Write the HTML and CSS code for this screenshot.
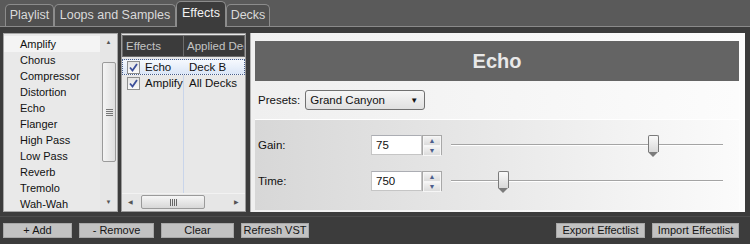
FILE: index.html
```
<!DOCTYPE html>
<html>
  <head>
    <meta charset="utf-8" />
    <title>Effects</title>
    <link rel="stylesheet" href="styles.css">
  </head>
  <body>
    <div id="tabbar">
      <div class="tab" style="width:49px">Playlist</div>
      <div class="tab" style="width:122px">Loops and Samples</div>
      <div class="tab active" style="width:50px">Effects</div>
      <div class="tab" style="width:44px">Decks</div>
    </div>

    <div id="workspace">
      <div id="effectlist">
        <div class="items">
          <div class="item current">Amplify</div>
          <div class="item">Chorus</div>
          <div class="item">Compressor</div>
          <div class="item">Distortion</div>
          <div class="item">Echo</div>
          <div class="item">Flanger</div>
          <div class="item">High Pass</div>
          <div class="item">Low Pass</div>
          <div class="item">Reverb</div>
          <div class="item">Tremolo</div>
          <div class="item">Wah-Wah</div>
        </div>
        <div class="vscroll">
          <div class="arrow">&#9650;</div>
          <div class="track">
            <div class="vthumb"><span class="grip-h"></span></div>
          </div>
          <div class="arrow">&#9660;</div>
        </div>
      </div>

      <div id="applied">
        <div class="header">
          <div class="col first">Effects</div>
          <div class="col">Applied Decks</div>
        </div>
        <div class="rows">
          <div class="row selected">
            <div class="col first"><span class="check"><svg width="11" height="11" viewBox="0 0 11 11"><path d="M2 5.5 L4.5 8.5 L9 2" fill="none" stroke="#3c4f9a" stroke-width="1.8"/></svg></span>Echo</div>
            <div class="col">Deck B</div>
          </div>
          <div class="row">
            <div class="col first"><span class="check"><svg width="11" height="11" viewBox="0 0 11 11"><path d="M2 5.5 L4.5 8.5 L9 2" fill="none" stroke="#3c4f9a" stroke-width="1.8"/></svg></span>Amplify</div>
            <div class="col">All Decks</div>
          </div>
        </div>
        <div class="hscroll">
          <div class="arrow">&#9664;</div>
          <div class="htrack">
            <div class="hthumb"><span class="grip-v"></span></div>
          </div>
          <div class="arrow">&#9654;</div>
        </div>
      </div>

      <div id="editor">
        <div class="title">Echo</div>
        <div class="presets">
          <span>Presets:</span>
          <div class="select">
            <span>Grand Canyon</span>
            <span class="caret">&#9660;</span>
          </div>
        </div>
        <div class="params">
          <div class="param">
            <span class="label">Gain:</span>
            <div class="number">75</div>
            <div class="spin">
              <div class="spinbtn">&#9650;</div>
              <div class="spinbtn">&#9660;</div>
            </div>
            <div class="slider">
              <div class="line"></div>
              <div class="knob" style="left:72.4%"></div>
            </div>
          </div>
          <div class="param">
            <span class="label">Time:</span>
            <div class="number">750</div>
            <div class="spin">
              <div class="spinbtn">&#9650;</div>
              <div class="spinbtn">&#9660;</div>
            </div>
            <div class="slider">
              <div class="line"></div>
              <div class="knob" style="left:17.3%"></div>
            </div>
          </div>
        </div>
      </div>
    </div>

    <div id="toolbar">
      <button style="width:69px">+ Add</button>
      <button style="width:75px">- Remove</button>
      <button style="width:73px">Clear</button>
      <button style="width:68px">Refresh VST</button>
      <div class="spacer"></div>
      <button style="width:89px">Export Effectlist</button>
      <button style="width:87px">Import Effectlist</button>
    </div>
  </body>
</html>
```

FILE: styles.css
```
* {
  box-sizing: border-box;
  font-family: "Liberation Sans", Arial, sans-serif;
}
body {
  margin: 0;
  width: 750px;
  height: 244px;
  overflow: hidden;
  background-color: #3c3c3c;
  font-size: 11px;
  color: #111;
}

/* tabs */
#tabbar {
  display: flex;
  align-items: flex-end;
  height: 27px;
  padding-left: 5px;
  background-color: #5a5a5a;
  border-bottom: 1px solid #8a8a8a;
}
.tab {
  height: 22px;
  line-height: 21px;
  text-align: center;
  font-size: 12.5px;
  color: #dadada;
  background-color: #505050;
  border: 1px solid #8c8c8c;
  border-bottom: none;
  border-radius: 5px 5px 0 0;
}
.tab.active {
  height: 26px;
  line-height: 22px;
  margin-bottom: -1px;
  color: #f2f2f2;
  background-color: #3c3c3c;
  position: relative;
}

/* panels */
#workspace {
  display: flex;
  height: 189px;
  padding: 6px 5px 0 3px;
}

#effectlist {
  display: flex;
  width: 115px;
  height: 179px;
  background-color: #e9e9e9;
  border: 1px solid #a6a6a6;
}
#effectlist .items {
  flex: 1;
  padding-top: 2px;
}
.item {
  height: 16px;
  line-height: 16px;
  padding-left: 16px;
}
.item.current {
  background-color: #f4f4f4;
}
.vscroll {
  width: 17px;
  display: flex;
  flex-direction: column;
  background-color: #e6e6e6;
}
.arrow {
  height: 17px;
  line-height: 17px;
  text-align: center;
  font-size: 6px;
  color: #555;
}
.track {
  flex: 1;
  padding: 11px 1px 0 2px;
}
.vthumb {
  height: 100px;
  border: 1px solid #9a9a9a;
  border-radius: 2px;
  background: linear-gradient(to right, #f4f4f4, #dedede);
  display: flex;
  align-items: center;
  justify-content: center;
}
.grip-h {
  width: 7px;
  height: 7px;
  background: repeating-linear-gradient(to bottom, #777 0 1px, transparent 1px 2px);
}

#applied {
  display: flex;
  flex-direction: column;
  width: 125px;
  height: 179px;
  margin-left: 3px;
  background-color: #e8e8e8;
  border: 1px solid #9c9c9c;
}
#applied .header {
  display: flex;
  height: 22px;
  margin: 1px 0 2px;
  background-color: #3b3b3b;
  border: 1px solid #6c6c6c;
  color: #c4c4c4;
  font-size: 11.5px;
  white-space: nowrap;
  overflow: hidden;
}
#applied .header .col {
  line-height: 20px;
  padding-left: 3px;
}
#applied .header .first {
  border-right: 1px solid #6c6c6c;
}
.col.first {
  width: 61px;
  flex-shrink: 0;
}
.rows {
  flex: 1;
  background: linear-gradient(to right, transparent 61px, #c9d5ea 61px, #c9d5ea 62px, transparent 62px);
}
.row {
  display: flex;
  height: 16px;
  line-height: 14px;
  white-space: nowrap;
  overflow: hidden;
  font-size: 11.5px;
  border: 1px solid transparent;
}
.row .col {
  display: flex;
  align-items: center;
  padding-left: 5px;
}
.row .col.first {
  padding-left: 4px;
}
.row.selected {
  border: 1px dotted #4a5f8a;
  background: linear-gradient(to bottom, #f6f9fe, #dbe6f7);
}
.check {
  width: 13px;
  height: 13px;
  margin-right: 5px;
  border: 1px solid #8e8f8f;
  background: linear-gradient(to bottom, #e4e4e4, #fafafa);
  display: flex;
  align-items: center;
  justify-content: center;
}
.hscroll {
  display: flex;
  height: 17px;
  margin-bottom: 1px;
  background-color: #e6e6e6;
  border-top: 1px solid #f2f2f2;
}
.hscroll .arrow {
  width: 17px;
  line-height: 16px;
}
.htrack {
  flex: 1;
  padding: 1px 0 1px 2px;
}
.hthumb {
  width: 64px;
  height: 100%;
  border: 1px solid #9a9a9a;
  border-radius: 2px;
  background: linear-gradient(to bottom, #f6f6f6, #d8d8d8);
  display: flex;
  align-items: center;
  justify-content: center;
}
.grip-v {
  width: 7px;
  height: 7px;
  background: repeating-linear-gradient(to right, #666 0 1px, transparent 1px 2px);
}

#editor {
  flex: 1;
  height: 179px;
  margin-left: 4px;
  padding: 8px 6px 1px 4px;
  background: linear-gradient(to right, #f0f0f0, #fdfdfd);
  border-left: 1px solid #b4b4b4;
}
#editor .title {
  height: 40px;
  line-height: 40px;
  text-align: center;
  background-color: #646464;
  color: #e8e8e8;
  font-size: 20px;
  font-weight: bold;
}
.presets {
  display: flex;
  align-items: center;
  gap: 5px;
  height: 39px;
  padding-left: 3px;
  font-size: 11.5px;
  background: linear-gradient(to right, #efefef, #fcfcfc);
  border-bottom: 1px solid #fff;
}
.select {
  display: flex;
  justify-content: space-between;
  align-items: center;
  width: 120px;
  height: 20px;
  padding: 0 6px 0 4px;
  border: 1px solid #707070;
  border-radius: 3px;
  background: linear-gradient(to bottom, #f6f6f6, #e0e0e0);
}
.caret {
  font-size: 8px;
  color: #111;
}
.params {
  height: 90px;
  padding-top: 15px;
  background: linear-gradient(to right, #d7d7d7, #fbfbfb);
}
.param {
  display: flex;
  align-items: center;
  height: 20px;
  margin-bottom: 16px;
  font-size: 11.5px;
}
.param .label {
  width: 116px;
  padding-left: 3px;
}
.number {
  width: 51px;
  height: 20px;
  line-height: 18px;
  padding-left: 4px;
  background-color: #fff;
  border: 1px solid #c5c5c5;
  border-top-color: #abadb3;
}
.spin {
  width: 20px;
  height: 20px;
  display: flex;
  flex-direction: column;
  border: 1px solid #a8a8a8;
  background-color: #e8e8e8;
}
.spinbtn {
  flex: 1;
  font-size: 7px;
  line-height: 8px;
  text-align: center;
  color: #4d5e8c;
  border: 1px solid #f6f6f6;
  background: linear-gradient(to bottom, #f2f2f2, #dcdcdc);
}
.slider {
  position: relative;
  width: 272px;
  height: 20px;
  margin-left: 9px;
}
.slider .line {
  position: absolute;
  top: 9px;
  left: 0;
  right: 0;
  height: 2px;
  border-top: 1px solid #a4a4a4;
  border-bottom: 1px solid #fff;
}
.knob {
  position: absolute;
  top: 0;
  width: 11px;
  height: 17px;
  border: 1px solid #7b7b7b;
  border-bottom: none;
  border-radius: 2px 2px 0 0;
  background: linear-gradient(to bottom, #fafafa, #d9d9d9);
}
.knob::after {
  content: "";
  position: absolute;
  left: -1px;
  bottom: -5px;
  width: 0;
  height: 0;
  border-left: 5.5px solid transparent;
  border-right: 5.5px solid transparent;
  border-top: 5px solid #7b7b7b;
}

/* bottom buttons */
#toolbar {
  display: flex;
  gap: 7px;
  height: 28px;
  padding: 6px 11px 0 3px;
  border-top: 1px solid #4c4c4c;
}
#toolbar .spacer {
  flex: 1;
}
#toolbar button {
  height: 15px;
  padding: 0;
  font-size: 11px;
  line-height: 13px;
  color: #151515;
  background-color: #c2c2c2;
  border: 1px solid #a8a8a8;
}
```
